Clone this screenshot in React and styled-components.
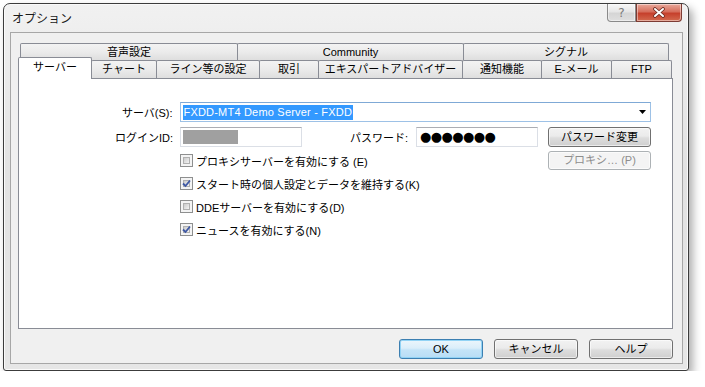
import React from 'react';
import styled, { createGlobalStyle } from 'styled-components';

const GlobalStyle = createGlobalStyle`
  html, body {
    margin: 0;
    padding: 0;
    background: #ffffff;
  }
  body {
    font-family: "Liberation Sans", "Noto Sans CJK JP", sans-serif;
    font-size: 11px;
    color: #000;
  }
`;

const Page = styled.div`
  padding: 3px 0 0 3px;
`;

const Window = styled.div`
  box-sizing: border-box;
  width: 686px;
  height: 368px;
  display: flex;
  flex-direction: column;
  padding: 0 5px 6px 6px;
  border: 1px solid #3c3c3c;
  border-radius: 7px 7px 3px 3px;
  background: linear-gradient(180deg, #f1f1f1 0%, #e2e2e2 45%, #e6e6e6 100%);
  box-shadow: inset 0 0 0 1px #fafafa, 4px 5px 9px rgba(0, 0, 0, 0.32);
`;

const TitleBar = styled.div`
  height: 28px;
  display: flex;
  justify-content: space-between;
  align-items: flex-start;
`;

const Title = styled.div`
  padding: 8px 0 0 2px;
  font-size: 12px;
  line-height: 14px;
  color: #1a1a1a;
  text-shadow: 0 0 6px #ffffff;
`;

const Caption = styled.div`
  display: flex;
  margin-right: 1px;
`;

const CapButton = styled.div`
  box-sizing: border-box;
  width: ${(p) => p.$w}px;
  height: 18px;
  display: flex;
  align-items: center;
  justify-content: center;
  border: 1px solid ${(p) => (p.$close ? '#7d3c34' : '#8a8a8a')};
  border-top: none;
  border-radius: ${(p) => (p.$close ? '0 0 4px 0' : '0 0 0 4px')};
  background: ${(p) =>
    p.$close
      ? 'linear-gradient(180deg, #e9a99b 0%, #d66e5c 45%, #c6402c 55%, #d36a4f 100%)'
      : 'linear-gradient(180deg, #f7f7f7 0%, #e6e6e6 45%, #d5d5d5 55%, #dfdfdf 100%)'};
  box-shadow: inset 0 0 0 1px rgba(255, 255, 255, 0.45);
  color: #7a7a7a;
  font-size: 12px;
  font-family: "DejaVu Sans", sans-serif;
`;

const Client = styled.div`
  flex: 1;
  display: flex;
  flex-direction: column;
  border: 1px solid #a7a7a7;
  background: #f0f0f0;
  padding: 10px 9px 4px 7px;
`;

const TabRow = styled.div`
  display: flex;
  align-items: flex-end;
  height: ${(p) => p.$h}px;
  margin-left: ${(p) => p.$indent}px;
`;

const Tab = styled.div`
  box-sizing: border-box;
  width: ${(p) => p.$w}px;
  height: ${(p) => (p.$active ? 22 : p.$h)}px;
  margin-left: -1px;
  margin-bottom: ${(p) => (p.$active ? -1 : 0)}px;
  display: flex;
  align-items: center;
  justify-content: center;
  padding-bottom: ${(p) => (p.$active ? 2 : 0)}px;
  border: 1px solid #898c95;
  border-bottom: none;
  border-radius: 2px 2px 0 0;
  background: ${(p) =>
    p.$active ? '#ffffff' : 'linear-gradient(180deg, #f3f3f3 0%, #ebebeb 50%, #dedede 100%)'};
  position: relative;
  z-index: ${(p) => (p.$active ? 2 : 1)};
  line-height: 13px;
  white-space: nowrap;
  &:first-child {
    margin-left: 0;
  }
`;

const Panel = styled.div`
  flex: 1;
  box-sizing: border-box;
  border: 1px solid #898c95;
  background: #ffffff;
  padding-top: 23px;
`;

const Row = styled.div`
  display: flex;
  align-items: center;
  width: 632px;
  height: ${(p) => p.$h || 20}px;
  margin-bottom: ${(p) => p.$gap || 0}px;
`;

const Label = styled.div`
  width: ${(p) => p.$w}px;
  margin-right: ${(p) => p.$mr}px;
  text-align: right;
  white-space: nowrap;
`;

const Combo = styled.div`
  box-sizing: border-box;
  width: 473px;
  height: 20px;
  display: flex;
  align-items: center;
  justify-content: space-between;
  padding: 0 4px 0 2px;
  border: 1px solid #9dc1e6;
  border-top-color: #7fa9d6;
`;

const Selection = styled.span`
  background: #3399ff;
  color: #ffffff;
  padding: 1px 1px;
  line-height: 13px;
  letter-spacing: 0.2px;
`;

const TextBox = styled.div`
  box-sizing: border-box;
  width: 122px;
  height: 20px;
  display: flex;
  align-items: center;
  padding: 0 2px;
  border: 1px solid #dbdfe6;
  border-top-color: #abadb3;
`;

const GreyFill = styled.div`
  width: 55px;
  height: 14px;
  background: #a0a0a0;
`;

const Dots = styled.span`
  font-family: "DejaVu Sans", sans-serif;
  font-size: 13px;
  letter-spacing: -0.6px;
  line-height: 14px;
  padding-left: 1px;
`;

const Button = styled.div`
  box-sizing: border-box;
  width: ${(p) => p.$w}px;
  height: ${(p) => p.$h || 20}px;
  margin-left: ${(p) => p.$ml || 0}px;
  display: flex;
  align-items: center;
  justify-content: center;
  border: 1px solid ${(p) => (p.$default ? '#3c7fb1' : p.$disabled ? '#adb2b5' : '#707070')};
  border-radius: 3px;
  color: ${(p) => (p.$disabled ? '#8d8d8d' : '#000')};
  background: ${(p) =>
    p.$default
      ? 'linear-gradient(180deg, #ecf6fc 0%, #dbeefa 45%, #c4e4f8 55%, #b8ddf5 100%)'
      : p.$disabled
      ? '#f4f4f4'
      : 'linear-gradient(180deg, #f2f2f2 0%, #ebebeb 45%, #dddddd 55%, #cfcfcf 100%)'};
  box-shadow: inset 0 0 0 1px ${(p) => (p.$default ? '#92d3f5' : 'rgba(255,255,255,0.6)')};
  white-space: nowrap;
  line-height: 13px;
`;

const Checks = styled.div`
  padding-left: 161px;
  padding-top: 2px;
`;

const CheckRow = styled.div`
  display: flex;
  align-items: center;
  height: 23px;
  width: 471px;
`;

const CheckItem = styled.label`
  flex: 1;
  display: flex;
  align-items: center;
  white-space: nowrap;
`;

const Box = styled.span`
  box-sizing: border-box;
  width: 13px;
  height: 13px;
  margin-right: 3px;
  border: 1px solid #8e8f8f;
  background: #f4f4f4;
  padding: 2px;
  display: flex;
  & > span {
    flex: 1;
    border: 1px solid #b0b0b0;
    background: linear-gradient(135deg, #cbcbcb 0%, #f3f3f3 100%);
    display: flex;
    align-items: center;
    justify-content: center;
  }
`;

const ButtonBar = styled.div`
  display: flex;
  justify-content: flex-end;
  gap: 11px;
  margin-top: 10px;
`;

const Check = ({ checked }) => (
  <Box>
    <span>
      {checked && (
        <svg width="9" height="9" viewBox="0 0 9 9" style={{ margin: '-2px' }}>
          <path d="M1 4.5 L3.5 7 L8 1.5" fill="none" stroke="#3e58a4" strokeWidth="1.8" />
        </svg>
      )}
    </span>
  </Box>
);

const topTabs = [
  ['音声設定', 218],
  ['Community', 227],
  ['シグナル', 206],
];

const bottomTabs = [
  ['サーバー', 74],
  ['チャート', 66],
  ['ライン等の設定', 104],
  ['取引', 60],
  ['エキスパートアドバイザー', 145],
  ['通知機能', 80],
  ['E-メール', 71],
  ['FTP', 61],
];

const options = [
  ['プロキシサーバーを有効にする (E)', false],
  ['スタート時の個人設定とデータを維持する(K)', true],
  ['DDEサーバーを有効にする(D)', false],
  ['ニュースを有効にする(N)', true],
];

export default function App() {
  return (
    <>
      <GlobalStyle />
      <Page>
        <Window>
          <TitleBar>
            <Title>オプション</Title>
            <Caption>
              <CapButton $w={29}>?</CapButton>
              <CapButton $w={46} $close>
                <svg width="14" height="11" viewBox="0 0 14 11">
                  <path d="M3 2 L11 9 M11 2 L3 9" stroke="#6b2a20" strokeWidth="3.6" strokeLinecap="round" />
                  <path d="M3 2 L11 9 M11 2 L3 9" stroke="#ffffff" strokeWidth="2" strokeLinecap="round" />
                </svg>
              </CapButton>
            </Caption>
          </TitleBar>
          <Client>
            <TabRow $h={17} $indent={2}>
              {topTabs.map(([t, w]) => (
                <Tab key={t} $w={w} $h={17}>{t}</Tab>
              ))}
            </TabRow>
            <TabRow $h={18} $indent={0}>
              {bottomTabs.map(([t, w], i) => (
                <Tab key={t} $w={w} $h={18} $active={i === 0}>{t}</Tab>
              ))}
            </TabRow>
            <Panel>
              <Row $gap={5}>
                <Label $w={154} $mr={7}>サーバ(S):</Label>
                <Combo>
                  <Selection>FXDD-MT4 Demo Server - FXDD</Selection>
                  <svg width="7" height="4" viewBox="0 0 7 4">
                    <path d="M0 0 H7 L3.5 4 Z" fill="#000" />
                  </svg>
                </Combo>
              </Row>
              <Row>
                <Label $w={154} $mr={7}>ログインID:</Label>
                <TextBox>
                  <GreyFill />
                </TextBox>
                <Label $w={106} $mr={8}>パスワード:</Label>
                <TextBox>
                  <Dots>●●●●●●●</Dots>
                </TextBox>
                <Button $w={103} $ml={10}>パスワード変更</Button>
              </Row>
              <Checks>
                {options.map(([t, c], i) => (
                  <CheckRow key={t}>
                    <CheckItem>
                      <Check checked={c} />
                      {t}
                    </CheckItem>
                    {i === 0 && (
                      <Button $w={103} $h={19} $disabled>プロキシ… (P)</Button>
                    )}
                  </CheckRow>
                ))}
              </Checks>
            </Panel>
            <ButtonBar>
              <Button $w={84} $default>OK</Button>
              <Button $w={84}>キャンセル</Button>
              <Button $w={84}>ヘルプ</Button>
            </ButtonBar>
          </Client>
        </Window>
      </Page>
    </>
  );
}
